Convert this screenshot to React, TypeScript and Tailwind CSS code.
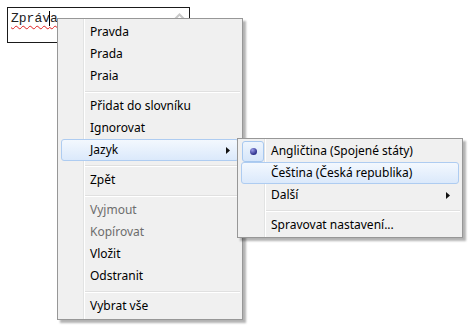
const FONT = "font-['Segoe_UI','Noto_Sans','Open_Sans',sans-serif]";

type Item =
  | { kind: 'item'; label: string; disabled?: boolean; active?: boolean; sub?: boolean; radio?: boolean }
  | { kind: 'sep' };

const Arrow = () => (
  <svg width="4" height="7" viewBox="0 0 4 7" className="shrink-0 mr-[8px]">
    <path d="M0 0 L4 3.5 L0 7 Z" fill="#111" />
  </svg>
);

const Radio = () => (
  <div className="absolute left-0 top-0 w-[22px] h-[21px] rounded-[3px] border border-[#a7c8ef] bg-gradient-to-b from-[#eef5fd] to-[#d6e6fa] flex items-center justify-center">
    <div className="w-[7px] h-[7px] rounded-full bg-[radial-gradient(circle_at_35%_30%,#9a9ce8,#2b2e8a_70%)]" />
  </div>
);

const Menu = ({ items, gutter, className }: { items: Item[]; gutter: number; className: string }) => (
  <div
    className={`absolute bg-[#f0f0f0] border border-[#979797] shadow-[3px_3px_2px_rgba(0,0,0,0.3)] ${FONT} text-[12px] ${className}`}
  >
    <div className="absolute top-0 bottom-0 w-px bg-[#e2e3e3] border-r border-white box-content" style={{ left: gutter }} />
    {items.map((it, i) =>
      it.kind === 'sep' ? (
        <div key={i} className="h-[8px] flex items-center pr-[2px]" style={{ paddingLeft: gutter + 1 }}>
          <div className="w-full h-px bg-[#e0e0e0] shadow-[0_1px_0_#fff]" />
        </div>
      ) : (
        <div
          key={i}
          className={`relative h-[22px] mx-[3px] flex items-center rounded-[3px] ${
            it.active ? 'border border-[#aeccf1] bg-gradient-to-b from-[#f3f8fe] to-[#dbe9fb]' : 'border border-transparent'
          }`}
        >
          {it.radio && <Radio />}
          <span
            className={`flex-1 leading-[20px] ${it.disabled ? 'text-[#6d6d6d]' : 'text-black'}`}
            style={{ paddingLeft: gutter + 3 }}
          >
            {it.label}
          </span>
          {it.sub && <Arrow />}
        </div>
      )
    )}
  </div>
);

const main: Item[] = [
  { kind: 'item', label: 'Pravda' },
  { kind: 'item', label: 'Prada' },
  { kind: 'item', label: 'Praia' },
  { kind: 'sep' },
  { kind: 'item', label: 'Přidat do slovníku' },
  { kind: 'item', label: 'Ignorovat' },
  { kind: 'item', label: 'Jazyk', active: true, sub: true },
  { kind: 'sep' },
  { kind: 'item', label: 'Zpět' },
  { kind: 'sep' },
  { kind: 'item', label: 'Vyjmout', disabled: true },
  { kind: 'item', label: 'Kopírovat', disabled: true },
  { kind: 'item', label: 'Vložit' },
  { kind: 'item', label: 'Odstranit' },
  { kind: 'sep' },
  { kind: 'item', label: 'Vybrat vše' },
];

const lang: Item[] = [
  { kind: 'item', label: 'Angličtina (Spojené státy)', radio: true },
  { kind: 'item', label: 'Čeština (Česká republika)', active: true },
  { kind: 'item', label: 'Další', sub: true },
  { kind: 'sep' },
  { kind: 'item', label: 'Spravovat nastavení...' },
];

export default function App() {
  return (
    <div className="relative w-[471px] h-[331px] bg-white overflow-hidden pt-[7px] pl-[7px]">
      <div className="relative w-[183px] h-[36px] border border-[#1a1a1a] bg-white flex items-start justify-between pl-[3px] pt-[3px] pr-[4px]">
        <span className="relative font-['Liberation_Mono','Courier_New',monospace] text-[13px] leading-[16px] text-[#222] underline decoration-wavy decoration-[#e02020] decoration-1 underline-offset-[3px]">
          Zpráv<span className="border-l border-black -ml-px">a</span>
        </span>
        <svg width="11" height="7" viewBox="0 0 11 7" className="mt-[2px]">
          <path d="M1 6 L5.5 1.5 L10 6" fill="none" stroke="#c8c8c8" strokeWidth="2" />
        </svg>
      </div>
      <Menu items={main} gutter={25} className="left-[57px] top-[18px] w-[186px] py-[2px]" />
      <Menu items={lang} gutter={26} className="left-[237px] top-[138px] w-[226px] py-px" />
    </div>
  );
}
